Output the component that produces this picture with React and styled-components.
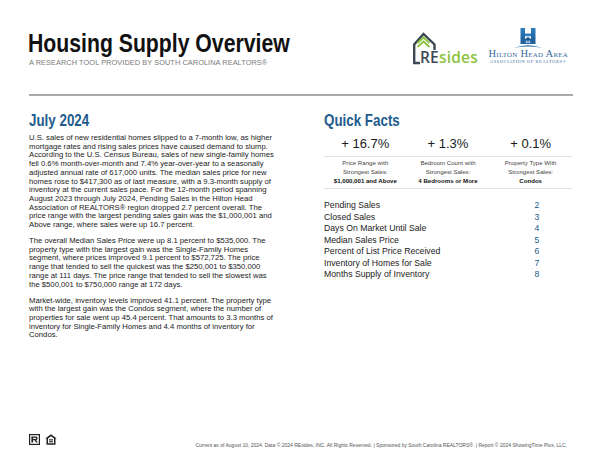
import React from 'react';
import styled, { createGlobalStyle } from 'styled-components';

const GlobalStyle = createGlobalStyle`
  html, body { margin: 0; padding: 0; background: #fff; }
  body { font-family: "Liberation Sans", Arial, sans-serif; color: #222; }
`;

const BLUE = '#225c8d';

const Page = styled.div`
  width: 600px;
  height: 463px;
  box-sizing: border-box;
  padding: 0 27px 0 29px;
  display: flex;
  flex-direction: column;
  overflow: hidden;
`;

const Header = styled.header`
  display: flex;
  justify-content: space-between;
  align-items: flex-start;
  height: 94px;
  box-sizing: border-box;
  padding-top: 28px;
`;

const TitleBlock = styled.div`
  display: flex;
  flex-direction: column;
  align-items: flex-start;
`;

// narrow bold face is not installed, so the bold face is squeezed
const Title = styled.h1`
  margin: 0 0 0 -1px;
  font-weight: 700;
  font-size: 26px;
  line-height: 30px;
  color: #111;
  transform: scaleX(0.816);
  transform-origin: left center;
`;

const Subtitle = styled.div`
  font-size: 7.4px;
  line-height: 10px;
  color: #7a7a7a;
  letter-spacing: 0.05px;
`;

const Logos = styled.div`
  display: flex;
  align-items: flex-start;
  gap: 5px;
  padding: 0 5px 0 0;
`;

const HHLogo = styled.div`
  display: flex;
  flex-direction: column;
  align-items: center;
  color: #3a6c9c;
`;

const HHName = styled.div`
  font-family: "Liberation Serif", serif;
  font-variant: small-caps;
  font-size: 10.6px;
  line-height: 10px;
  letter-spacing: 0.2px;
  white-space: nowrap;
`;

const HHAssoc = styled.div`
  font-family: "Liberation Serif", serif;
  font-size: 4.3px;
  line-height: 6px;
  letter-spacing: 0.65px;
  white-space: nowrap;
`;

const Rule = styled.hr`
  margin: 0;
  border: 0;
  height: 2px;
  background: #a9a9a9;
`;

const Columns = styled.main`
  display: grid;
  grid-template-columns: 250px 248px;
  column-gap: 45px;
  padding-top: 15px;
`;

const Heading = styled.h2`
  margin: 0;
  font-weight: 700;
  font-size: 16.5px;
  line-height: 18px;
  color: ${BLUE};
  transform: scaleX(0.81);
  transform-origin: left center;
`;

const Story = styled.div`
  margin-top: 5px;
  display: flex;
  flex-direction: column;
  gap: 7.3px;
`;

const Para = styled.p`
  margin: 0;
  font-size: 7.7px;
  line-height: 8.7px;
  color: #222;
`;

const Line = styled.span`
  display: block;
  white-space: nowrap;
`;

const FactRow = styled.div`
  display: grid;
  grid-template-columns: repeat(3, 1fr);
  margin-top: 7px;
`;

const FactValue = styled.div`
  text-align: center;
  font-size: 13px;
  line-height: 16px;
  color: #1a1a1a;
  padding-bottom: 4px;
  border-bottom: 1px solid #e2e2e2;
`;

const FactLabel = styled.div`
  text-align: center;
  font-size: 6.1px;
  line-height: 8.8px;
  color: #444;
  padding: 2px 0 3px;
  border-bottom: 1px solid #e2e2e2;
  b { color: #111; }
`;

const FactList = styled.ul`
  list-style: none;
  margin: 11px 0 0;
  padding: 0;
`;

const FactItem = styled.li`
  display: grid;
  grid-template-columns: 206px 14px;
  font-size: 8.7px;
  line-height: 11.5px;
  color: #222;
`;

const PageNo = styled.span`
  text-align: center;
  color: ${BLUE};
`;

const Footer = styled.footer`
  margin-top: auto;
  display: flex;
  justify-content: space-between;
  align-items: flex-end;
  padding: 0 6px 15px 0;
`;

const Badges = styled.div`
  display: flex;
  align-items: flex-start;
  gap: 5px;
  padding-bottom: 3px;
`;

const FooterText = styled.div`
  font-size: 5px;
  line-height: 6px;
  color: #555;
  white-space: nowrap;
`;

const ResidesLogo = () => (
  <svg width="72" height="42" viewBox="0 0 72 42">
    <path d="M8 35 L2.2 35 L2.2 16.5 L11.5 6 L22.5 16.5 L22.5 22" fill="none" stroke="#3b4955" strokeWidth="2.4" strokeLinejoin="miter" />
    <polyline points="5.5,15 11.5,9.5 17.5,15" fill="none" stroke="#8cc43f" strokeWidth="1.8" />
    <polyline points="5.5,19 11.5,13.5 17.5,19" fill="none" stroke="#8cc43f" strokeWidth="1.8" />
    <text x="8" y="35" fontFamily="'Open Sans', sans-serif" fontWeight="600" fontSize="15.5" letterSpacing="0.2">
      <tspan fill="#3b4955">RE</tspan>
      <tspan fill="#8cc43f">sides</tspan>
    </text>
  </svg>
);

const HMark = () => (
  <svg width="32" height="21" viewBox="0 0 32 21">
    <defs>
      <linearGradient id="hpost" x1="0" y1="0" x2="0" y2="1">
        <stop offset="0" stopColor="#2f7cc0" />
        <stop offset="1" stopColor="#1d5a94" />
      </linearGradient>
    </defs>
    <rect x="8.5" y="0" width="4.5" height="16" fill="url(#hpost)" />
    <rect x="19" y="0" width="4.5" height="16" fill="url(#hpost)" />
    <rect x="13" y="5.5" width="6" height="2.8" fill="#2f7cc0" />
    <path d="M10.5 12.8 L16 9 L21.5 12.8 Z" fill="#1d5a94" />
    <rect x="12.3" y="12.4" width="7.4" height="3.6" fill="#2a6aa8" />
    <rect x="14" y="13.2" width="1.5" height="1.5" fill="#fff" />
    <rect x="16.5" y="13.2" width="1.5" height="1.5" fill="#fff" />
    <path d="M2 20 Q16 14.5 30 20 Q16 17.2 2 20 Z" fill="#2a6aa8" />
  </svg>
);

const RealtorMark = () => (
  <svg width="11" height="11" viewBox="0 0 11 11">
    <rect x="0" y="0" width="11" height="11" fill="#222" />
    <rect x="1.2" y="1.2" width="8.6" height="8.6" fill="#fff" />
    <path d="M2.4 2.4 H6.8 Q8.6 2.4 8.6 4.3 Q8.6 5.8 7.2 6.1 L8.8 8.6 H7.1 L5.7 6.2 H4.1 V8.6 H2.4 Z M4.1 3.7 V5 H6.5 Q7 5 7 4.35 Q7 3.7 6.5 3.7 Z" fill="#222" />
  </svg>
);

const EqualHousingMark = () => (
  <svg width="12" height="11" viewBox="0 0 12 11">
    <path d="M6 0.3 L11.8 4.6 L10.5 4.6 L10.5 10.7 L1.5 10.7 L1.5 4.6 L0.2 4.6 Z" fill="#222" />
    <path d="M6 2.3 L9 4.6 L9 9.3 L3 9.3 L3 4.6 Z" fill="#fff" />
    <rect x="4" y="5.3" width="4" height="1.1" fill="#222" />
    <rect x="4" y="7.2" width="4" height="1.1" fill="#222" />
  </svg>
);

const story = [
  [
    'U.S. sales of new residential homes slipped to a 7-month low, as higher',
    'mortgage rates and rising sales prices have caused demand to slump.',
    'According to the U.S. Census Bureau, sales of new single-family homes',
    'fell 0.6% month-over-month and 7.4% year-over-year to a seasonally',
    'adjusted annual rate of 617,000 units. The median sales price for new',
    'homes rose to $417,300 as of last measure, with a 9.3-month supply of',
    'inventory at the current sales pace. For the 12-month period spanning',
    'August 2023 through July 2024, Pending Sales in the Hilton Head',
    'Association of REALTORS® region dropped 2.7 percent overall. The',
    'price range with the largest pending sales gain was the $1,000,001 and',
    'Above range, where sales were up 16.7 percent.',
  ],
  [
    'The overall Median Sales Price were up 8.1 percent to $535,000. The',
    'property type with the largest gain was the Single-Family Homes',
    'segment, where prices improved 9.1 percent to $572,725. The price',
    'range that tended to sell the quickest was the $250,001 to $350,000',
    'range at 111 days. The price range that tended to sell the slowest was',
    'the $500,001 to $750,000 range at 172 days.',
  ],
  [
    'Market-wide, inventory levels improved 41.1 percent. The property type',
    'with the largest gain was the Condos segment, where the number of',
    'properties for sale went up 45.4 percent. That amounts to 3.3 months of',
    'inventory for Single-Family Homes and 4.4 months of inventory for',
    'Condos.',
  ],
];

const facts = [
  { value: '+ 16.7%', label: ['Price Range with', 'Strongest Sales:'], strong: '$1,000,001 and Above' },
  { value: '+ 1.3%', label: ['Bedroom Count with', 'Strongest Sales:'], strong: '4 Bedrooms or More' },
  { value: '+ 0.1%', label: ['Property Type With', 'Strongest Sales:'], strong: 'Condos' },
];

const contents = [
  ['Pending Sales', 2],
  ['Closed Sales', 3],
  ['Days On Market Until Sale', 4],
  ['Median Sales Price', 5],
  ['Percent of List Price Received', 6],
  ['Inventory of Homes for Sale', 7],
  ['Months Supply of Inventory', 8],
];

export default function App() {
  return (
    <Page>
      <GlobalStyle />
      <Header>
        <TitleBlock>
          <Title>Housing Supply Overview</Title>
          <Subtitle>A RESEARCH TOOL PROVIDED BY SOUTH CAROLINA REALTORS®</Subtitle>
        </TitleBlock>
        <Logos>
          <ResidesLogo />
          <HHLogo>
            <HMark />
            <HHName>Hilton Head Area</HHName>
            <HHAssoc>ASSOCIATION OF REALTORS®</HHAssoc>
          </HHLogo>
        </Logos>
      </Header>
      <Rule />
      <Columns>
        <section>
          <Heading>July 2024</Heading>
          <Story>
            {story.map((lines, i) => (
              <Para key={i}>
                {lines.map((l, j) => <Line key={j}>{l}</Line>)}
              </Para>
            ))}
          </Story>
        </section>
        <section>
          <Heading>Quick Facts</Heading>
          <FactRow>
            {facts.map((f) => <FactValue key={f.value}>{f.value}</FactValue>)}
            {facts.map((f) => (
              <FactLabel key={f.strong}>
                {f.label[0]}<br />{f.label[1]}<br /><b>{f.strong}</b>
              </FactLabel>
            ))}
          </FactRow>
          <FactList>
            {contents.map(([name, page]) => (
              <FactItem key={name}>
                <span>{name}</span>
                <PageNo>{page}</PageNo>
              </FactItem>
            ))}
          </FactList>
        </section>
      </Columns>
      <Footer>
        <Badges>
          <RealtorMark />
          <EqualHousingMark />
        </Badges>
        <FooterText>
          Current as of August 10, 2024. Data © 2024 REsides, INC. All Rights Reserved. | Sponsored by South Carolina REALTORS®. | Report © 2024 ShowingTime Plus, LLC.
        </FooterText>
      </Footer>
    </Page>
  );
}
